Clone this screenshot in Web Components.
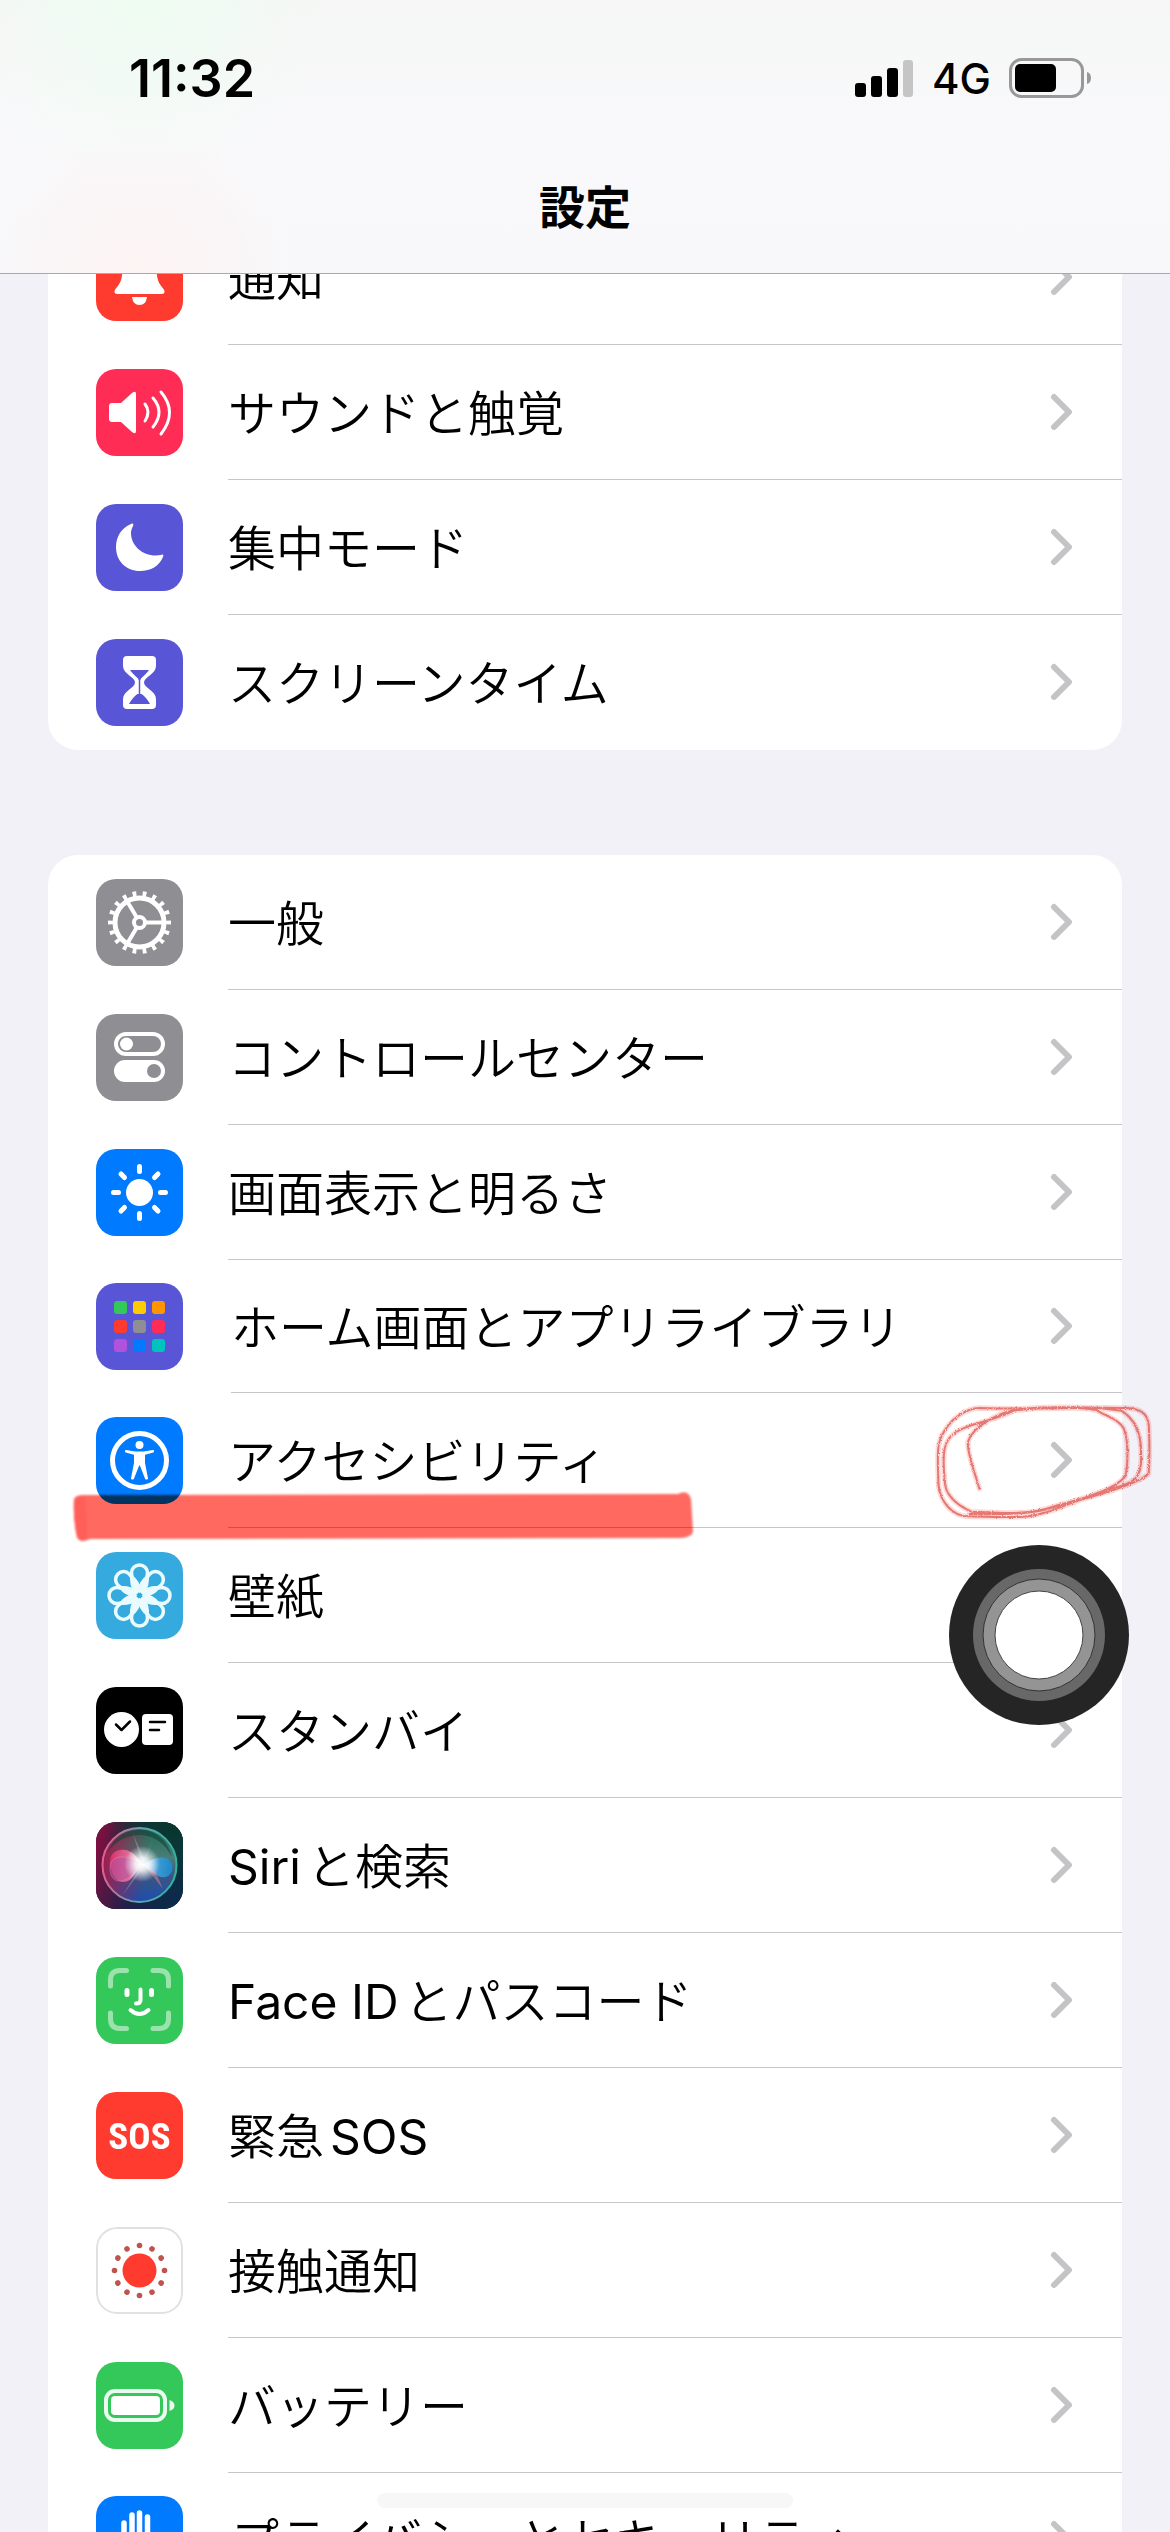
<!DOCTYPE html>
<html lang="ja">
<head>
<meta charset="utf-8">
<meta name="viewport" content="width=device-width, initial-scale=1">
<title>設定</title>
<style>
    html, body {
        margin: 0;
        height: 100%;
    }
    body {
        overflow: hidden;
        background: #f2f1f8;
        color: #000;
        font-family: Inter, "Noto Sans CJK JP", sans-serif;
        font-size: 48px;
    }
</style>
</head>
<body>
<settings-app>
    <status-bar slot="top" time="11:32" network="4G"></status-bar>
    <nav-bar slot="top">設定</nav-bar>

    <settings-group>
        <settings-row icon="bell" color="#ff3b30">通知</settings-row>
        <settings-row icon="sound" color="#ff2d55">サウンドと触覚</settings-row>
        <settings-row icon="moon" color="#5856d6">集中モード</settings-row>
        <settings-row icon="hourglass" color="#5856d6">スクリーンタイム</settings-row>
    </settings-group>

    <settings-group>
        <settings-row icon="gear" color="#8e8e93">一般</settings-row>
        <settings-row icon="toggles" color="#8e8e93">コントロールセンター</settings-row>
        <settings-row icon="sun" color="#007aff">画面表示と明るさ</settings-row>
        <settings-row icon="grid" color="#5856d6" compact>ホーム画面とアプリライブラリ</settings-row>
        <settings-row icon="person" color="#007aff">アクセシビリティ<marker-line slot="mark"></marker-line><pencil-ring slot="mark"></pencil-ring></settings-row>
        <settings-row icon="flower" color="#34aadf">壁紙</settings-row>
        <settings-row icon="standby" color="#000">スタンバイ</settings-row>
        <settings-row icon="siri" color="#123"><span class="lead">Siri</span>と検索</settings-row>
        <settings-row icon="face" color="#34c759"><span class="lead">Face ID</span>とパスコード</settings-row>
        <settings-row icon="sos" color="#ff3b30">緊急<span class="tail">SOS</span></settings-row>
        <settings-row icon="exposure" color="#fff">接触通知</settings-row>
        <settings-row icon="battery" color="#34c759">バッテリー</settings-row>
        <settings-row icon="hand" color="#007aff" compact>プライバシーとセキュリティ</settings-row>
    </settings-group>

    <assistive-touch slot="overlay"></assistive-touch>
    <home-indicator slot="overlay"></home-indicator>
</settings-app>

<script>
// All glyphs are drawn on the same 87 x 87 tile
const icons = {
    bell: `<path fill="#fff" d="M43.500 14c-11 0-17 8-17 18 0 14-2 17-7 23-2 3-1 5 2 5h44c3 0 4-2 2-5-5-6-7-9-7-23 0-10-6-18-17-18zM36 63h15q-1 8-7.500 8T36 63z"/>`,
    sound: `<path fill="#fff" d="M16 34h9l11-10q4-3 4 1v37q0 4-4 1L25 53h-9q-3 0-3-3V37q0-3 3-3z"/>
        <g fill="none" stroke="#fff" stroke-width="3" stroke-linecap="round"><path d="M49 35q6 8 0 17M57 29q12 14 0 29M65 23q17 20 0 42"/></g>`,
    moon: `<path fill="#fff" d="M35 20C25 24 20 33 20 43c0 14 10 24 24 24 11 0 19-5 23-14 1-2 0-3-2-2C49 54 35 43 35 29c0-3 1-5 2-7 1-2 0-3-2-2z"/>`,
    hourglass: `<path fill="#fff" d="M31 17h25q4 0 4 4v6c0 8-12 11-12 16.500s12 8.500 12 16.500v6q0 4-4 4H31q-4 0-4-4v-6c0-8 12-11 12-16.500S27 35 27 27v-6q0-4 4-4z"/>
        <path fill="#5856d6" d="M34 31h19q-2 3-8.500 9v14Q51 59 54 65H33q3-6 9.500-11V40Q36 34 34 31z"/><path stroke="#fff" stroke-width="5" d="M43.500 41v14"/><path stroke="#5856d6" stroke-width="1.500" d="M43.500 38v18"/>`,
    gear: `<g fill="none" stroke="#fff">
        <circle cx="43.500" cy="43.500" r="29" stroke-width="5" pathLength="36" stroke-dasharray=".75 1.250" stroke-dashoffset=".375"/>
        <circle cx="43.500" cy="43.500" r="24.500" stroke-width="5"/>
        <circle cx="43.500" cy="43.500" r="5.500" stroke-width="4"/>
        <path stroke-width="4" d="M50 43.500h18M40.500 38L31 22M40.500 49L31 65"/></g>`,
    toggles: `<rect x="20" y="20" width="47" height="20" rx="10" fill="none" stroke="#fff" stroke-width="4"/><circle cx="30.500" cy="30" r="6.500" fill="#fff"/>
        <rect x="18" y="46" width="51" height="22" rx="11" fill="#fff"/><circle cx="58" cy="57" r="7" fill="#8e8e93"/>`,
    sun: `<circle cx="43.500" cy="43.500" r="13.500" fill="#fff"/>
        <path stroke="#fff" stroke-width="5" stroke-linecap="round" d="M43.500 17.500v5M43.500 64.500v5M17.500 43.500h5M64.500 43.500h5M25 25l3.500 3.500M58.500 58.500L62 62M25 62l3.500-3.500M58.500 28.500L62 25"/>`,
    grid: ["#34c759", "#ffcc00", "#ff9500", "#ff3b30", "#8e8e93", "#ff2d55", "#af52de", "#007aff", "#00c3be"]
        .map((c, i) => `<rect x="${18 + (i % 3) * 19}" y="${18 + Math.floor(i / 3) * 19}" width="13" height="13" rx="3" fill="${c}"/>`).join(""),
    person: `<circle cx="43.500" cy="43.500" r="27" fill="none" stroke="#fff" stroke-width="5"/><circle cx="43.500" cy="28" r="4" fill="#fff"/>
        <path fill="#fff" stroke="#fff" stroke-width="2" stroke-linejoin="round" d="M30 34l9 1.500h9l9-1.500v.5l-9 2.500v9l3 15.500h-1l-5.500-14h-2l-5.500 14h-1l3-15.500v-9l-9-2.500z"/>`,
    flower: `<g fill="none" stroke="#e9fbff" stroke-width="3.500">` +
        [0, 45, 90, 135, 180, 225, 270, 315].map(a => `<path transform="rotate(${a} 43.5 43.5)" d="M43.500 39C40 37 35.500 28 35.500 21a8 8 0 0 1 16 0C51.500 28 47 37 43.500 39zM36 24C35 31 37 36 40 40M51 24C52 31 50 36 47 40"/>`).join("") +
        `<circle cx="43.500" cy="43.500" r="5"/></g>`,
    standby: `<circle cx="25.500" cy="42.500" r="17.500" fill="#fff"/><rect x="46" y="27" width="31" height="31" rx="4" fill="#fff"/>
        <path fill="none" stroke="#000" stroke-width="2.500" stroke-linecap="round" stroke-linejoin="round" d="M20 37.500l5.500 5.500 8.500-8.500M54 35h15M54 43h9"/>`,
    siri: `<defs>
        <linearGradient id="base" x1="0" y1=".3" x2="1" y2=".6"><stop stop-color="#7d1040"/><stop offset=".5" stop-color="#1f2048"/><stop offset="1" stop-color="#0a2c48"/></linearGradient>
        <radialGradient id="corner" cx=".9" cy="0" r=".8"><stop stop-color="#06372b"/><stop offset=".5" stop-color="#0a3a35" stop-opacity=".8"/><stop offset="1" stop-color="#06372b" stop-opacity="0"/></radialGradient>
        <linearGradient id="orb" x1=".5" y1="0" x2=".5" y2="1"><stop stop-color="#1f6b52"/><stop offset=".4" stop-color="#4a7d78"/><stop offset=".65" stop-color="#3a5580"/><stop offset="1" stop-color="#1c4db0"/></linearGradient>
        <linearGradient id="side" x1="0" y1=".4" x2=".6" y2=".5"><stop stop-color="#a01a50"/><stop offset="1" stop-color="#a01a50" stop-opacity="0"/></linearGradient>
        <linearGradient id="rim" x1="0" y1=".4" x2="1" y2=".5"><stop stop-color="#e0608c"/><stop offset=".5" stop-color="#62a6b0"/><stop offset="1" stop-color="#2fb3a0"/></linearGradient>
        <linearGradient id="pink"><stop stop-color="#e0306c"/><stop offset=".6" stop-color="#e8709c"/><stop offset="1" stop-color="#fff"/></linearGradient>
        <linearGradient id="blue"><stop stop-color="#e4f6ff"/><stop offset=".5" stop-color="#3fa0dc"/><stop offset="1" stop-color="#1a8ad0"/></linearGradient>
        <radialGradient id="flare"><stop stop-color="#fff"/><stop offset=".35" stop-color="#fff" stop-opacity=".85"/><stop offset="1" stop-color="#fff" stop-opacity="0"/></radialGradient></defs>
        <rect width="87" height="87" fill="url(#base)"/><rect width="87" height="87" fill="url(#corner)"/>
        <circle cx="43.500" cy="43" r="37" fill="url(#orb)"/><circle cx="43.500" cy="43" r="37" fill="url(#side)" stroke="url(#rim)" stroke-width="2"/>
        <path fill="#0f4238" opacity=".6" d="M12 30C18 14 31 8 44 8s27 8 32 27C68 19 55 13 44 13S20 18 12 30z"/>
        <path fill="url(#pink)" opacity=".9" d="M46 42C37 28 30 27 24 28c-9 1-12 10-9 19 3 13 13 16 20 10z"/>
        <path fill="#b05aa8" opacity=".5" stroke="#f0a0c8" stroke-width=".7" d="M46 42C30 31 14 33 14 46c0 18 17 18 32-4z"/>
        <path fill="url(#blue)" opacity=".9" d="M46 43c10-6 17-9 23-7 10 2 10 16 1 19-8 2-14-6-24-12z"/>
        <path fill="#9ec7e7" opacity=".35" d="M46 42L26 74l22-29 6 1zM46 42L37 12l12 26 8-20z"/>
        <path fill="#f08098" opacity=".5" d="M47 43l10 11 10 13-7-16z"/>
        <circle cx="46" cy="42" r="18" fill="url(#flare)"/>`,
    face: `<g fill="none" stroke="#fff" stroke-width="5" stroke-linecap="round">
        <path opacity=".5" d="M14.500 29V23q0-9.500 9.500-9.500h6.500M57 13.500h6q9.500 0 9.500 9.500v6M72.500 56v6q0 9.500-9.500 9.500h-6M30.500 71.500H24q-9.500 0-9.500-9.500v-6"/>
        <path d="M31 33.500v4M55.500 33.500v4"/><path stroke-width="4" d="M44.500 32.500V43q0 3.500-4.500 3.500M34.500 53q9 8 18 0"/></g>`,
    sos: `<text x="43.500" y="57" text-anchor="middle" fill="#fff" font-family="'Roboto Condensed', 'Open Sans Condensed', 'Liberation Sans Narrow', Roboto, sans-serif" font-weight="700" font-size="37">SOS</text>`,
    exposure: `<rect x="1" y="1" width="85" height="85" rx="20" fill="#fff" stroke="#e1e1e3" stroke-width="2"/><circle cx="43.500" cy="43.500" r="17" fill="#ff3b30"/>
        <g fill="#c0544c">` + [...Array(12).keys()].map(i => `<circle cx="43.500" cy="18.500" r="2.800" transform="rotate(${i * 30} 43.5 43.5)"/>`).join("") + `</g>`,
    battery: `<rect x="10" y="29" width="59" height="29" rx="9" fill="none" stroke="#fff" stroke-opacity=".9" stroke-width="4"/><rect x="15" y="34" width="49" height="19" rx="4" fill="#fff"/><path fill="#fff" fill-opacity=".9" d="M73.500 38q5 1.500 5 5.500t-5 5.500z"/>`,
    hand: `<path fill="none" stroke="#fff" stroke-width="5.500" stroke-linecap="round" d="M28 27v26M36 19v28M43.500 17v28M51.500 21v30M67 45L56 60"/><path fill="#fff" d="M25 42h30v12l6 3q-5 16-18 16-18 0-18-18z"/>`
};

function stamp(host, html) {
    const template = document.createElement("template");
    template.innerHTML = html;
    host.attachShadow({ mode: "open" }).appendChild(template.content.cloneNode(true));
}

class SettingsApp extends HTMLElement {
    constructor() {
        super();
        stamp(this, `
            <style>
                :host { display: flex; flex-direction: column; height: 100vh; overflow: hidden; position: relative; }
                header {
                    position: relative;
                    z-index: 2;
                    flex: none;
                    border-bottom: 1px solid #a9a9ad;
                    background:
                        radial-gradient(circle at 12% 0, #eefcf1 0, transparent 180px),
                        radial-gradient(circle at 12% 100%, #fdf3f3 0, transparent 160px),
                        linear-gradient(#f5f6f5, #f9f9fb 45%, #f8f8fa);
                }
                /* the list is scrolled a little way under the bar */
                main { display: flex; flex-direction: column; gap: 105px; margin-top: -64px; padding: 0 48px; }
            </style>
            <header><slot name="top"></slot></header>
            <main><slot></slot></main>
            <slot name="overlay"></slot>
        `);
    }
}

class StatusBar extends HTMLElement {
    constructor() {
        super();
        stamp(this, `
            <style>
                :host { display: flex; align-items: center; justify-content: space-between; height: 156px; padding: 0 78px 0 129px; }
                #time { font-size: 52px; font-weight: 600; }
                .right { display: flex; align-items: center; gap: 18px; }
                #network { font-size: 42px; font-weight: 450; }
                svg { display: block; }
            </style>
            <time id="time"></time>
            <div class="right">
                <svg width="59" height="38" viewBox="0 0 59 38" aria-label="電波"><rect y="24" width="11" height="14" rx="3"/><rect x="16" y="17" width="11" height="21" rx="3"/><rect x="32" y="9" width="11" height="29" rx="3"/><rect x="48" y="1" width="10" height="37" rx="3" fill="#c5c5c6"/></svg>
                <span id="network"></span>
                <svg width="83" height="40" viewBox="0 0 83 40" aria-label="バッテリー残量"><rect x="1.500" y="1.500" width="72" height="37" rx="11" fill="none" stroke="#98989b" stroke-width="3"/><rect x="6" y="6" width="41" height="28" rx="5"/><path fill="#98989b" d="M78 14q4 1 4 6t-4 6z"/></svg>
            </div>
        `);
    }
    connectedCallback() {
        this.shadowRoot.getElementById("time").textContent = this.getAttribute("time");
        this.shadowRoot.getElementById("network").textContent = this.getAttribute("network");
    }
}

class NavBar extends HTMLElement {
    constructor() {
        super();
        stamp(this, `
            <style>
                :host { display: flex; align-items: center; justify-content: center; height: 117px; }
                h1 { margin: 0 0 16px; font-size: 46px; line-height: 64px; font-weight: 700; }
            </style>
            <h1><slot></slot></h1>
        `);
    }
}

class SettingsGroup extends HTMLElement {
    constructor() {
        super();
        stamp(this, `
            <style>
                :host { display: block; border-radius: 30px; background: #fff; }
                ::slotted(:last-child) { --line: transparent; }
            </style>
            <slot></slot>
        `);
    }
}

class SettingsRow extends HTMLElement {
    constructor() {
        super();
        stamp(this, `
            <style>
                :host { display: block; position: relative; --height: 135px; --inset: 0px; }
                :host([compact]) { --height: 133px; --inset: 3px; }
                a { display: flex; align-items: center; gap: 45px; height: var(--height); padding-left: 48px; color: inherit; text-decoration: none; }
                .icon { flex: none; width: 87px; height: 87px; border-radius: 20px; overflow: hidden; }
                .icon svg, .chevron { display: block; }
                .body {
                    box-sizing: border-box;
                    display: flex; flex: 1; align-items: center; justify-content: space-between;
                    height: 100%;
                    margin-left: var(--inset);
                    padding-right: 49px;
                    border-bottom: 1px solid var(--line, #c6c6c8);
                }
                .label { line-height: 64px; padding-top: 4px; font-weight: 350; white-space: nowrap; }
                ::slotted(span) { font-weight: 400; }
                ::slotted(.lead) { margin-right: 6px; }
                ::slotted(.tail) { margin-left: 6px; }
            </style>
            <a href="#">
                <span class="icon"></span>
                <span class="body">
                    <span class="label"><slot></slot></span>
                    <svg class="chevron" width="23" height="38" viewBox="0 0 23 38" fill="none" stroke="#c4c4c6" stroke-width="6" stroke-linecap="round" stroke-linejoin="round"><path d="M4 4l15 15L4 34"/></svg>
                </span>
            </a>
            <slot name="mark"></slot>
        `);
    }
    connectedCallback() {
        const icon = this.shadowRoot.querySelector(".icon");
        icon.style.background = this.getAttribute("color");
        icon.innerHTML = `<svg width="87" height="87" viewBox="0 0 87 87">${icons[this.getAttribute("icon")]}</svg>`;
    }
}

// Highlighter stroke under a row
class MarkerLine extends HTMLElement {
    constructor() {
        super();
        stamp(this, `
            <style>
                :host { position: absolute; left: 24px; top: 98px; z-index: 1; mix-blend-mode: multiply; pointer-events: none; }
                svg { display: block; }
            </style>
            <svg width="624" height="52" viewBox="0 0 624 52">
                <filter id="soft"><feGaussianBlur stdDeviation="1"/></filter>
                <g filter="url(#soft)">
                    <path fill="#ff6961" d="M2 9q1-5 10-5l594-1q10-5 13 5l2 33q-2 6-15 6L18 48q-10 5-13-2Q1 28 2 9z"/>
                    <path fill="#ff5e58" d="M2 9q1-5 10-4 4 20 3 42-7 5-10-1Q1 28 2 9z"/>
                </g>
            </svg>
        `);
    }
}

// Loose pencil loop round a row's chevron
class PencilRing extends HTMLElement {
    constructor() {
        super();
        const loop = "M239 746C228 705 200 635 205 605C218 560 300 512 370 506C450 500 530 500 590 510C615 528 655 535 672 565C688 600 685 680 676 710C640 755 530 780 460 800C380 830 270 815 215 815C160 790 135 760 135 720C130 670 130 620 145 600C175 550 290 545 340 512C450 500 570 498 665 512C710 540 725 590 724 640C730 730 690 730 620 750C540 775 450 825 370 830C310 832 240 830 190 828C140 815 115 765 116 720C115 670 110 620 125 590C150 535 200 505 240 504C400 510 560 500 680 504C735 506 748 530 748 570C750 620 750 660 747 700C715 735 560 775 460 802C400 825 290 823 210 822";
        stamp(this, `
            <style>
                :host { position: absolute; right: -35px; top: 7px; z-index: 1; pointer-events: none; }
                svg { display: block; }
            </style>
            <svg width="224" height="123" viewBox="100 480 672 369" fill="none" stroke-linecap="round">
                <filter id="grain" x="-5%" y="-5%" width="110%" height="110%"><feTurbulence type="fractalNoise" baseFrequency=".4" numOctaves="2"/><feDisplacementMap in="SourceGraphic" scale="9"/></filter>
                <path stroke="#ff6a64" stroke-opacity=".25" stroke-width="16" d="${loop}"/>
                <path stroke="#dc5650" stroke-opacity=".75" stroke-width="6" filter="url(#grain)" d="${loop}"/>
            </svg>
        `);
    }
}

class AssistiveTouch extends HTMLElement {
    constructor() {
        super();
        stamp(this, `
            <style>
                :host { position: absolute; right: 41px; top: 1545px; z-index: 3; }
                button { display: block; padding: 0; border: 0; border-radius: 50%; background: none; }
                svg { display: block; }
            </style>
            <button type="button" aria-label="AssistiveTouch">
                <svg width="180" height="180" viewBox="0 0 180 180"><circle cx="90" cy="90" r="90" fill="#252525"/><circle cx="90" cy="90" r="66" fill="#686868"/><circle cx="90" cy="90" r="56" fill="#949494" stroke="#333" stroke-width="1"/><circle cx="90" cy="90" r="44" fill="#fff" stroke="#444" stroke-width="1"/></svg>
            </button>
        `);
    }
}

class HomeIndicator extends HTMLElement {
    constructor() {
        super();
        stamp(this, `
            <style>
                :host { position: absolute; left: 0; right: 0; bottom: 24px; z-index: 3; display: flex; justify-content: center; pointer-events: none; }
                i { width: 416px; height: 15px; border-radius: 8px; background: #f7f7f7; }
            </style>
            <i></i>
        `);
    }
}

customElements.define("settings-app", SettingsApp);
customElements.define("status-bar", StatusBar);
customElements.define("nav-bar", NavBar);
customElements.define("settings-group", SettingsGroup);
customElements.define("settings-row", SettingsRow);
customElements.define("marker-line", MarkerLine);
customElements.define("pencil-ring", PencilRing);
customElements.define("assistive-touch", AssistiveTouch);
customElements.define("home-indicator", HomeIndicator);
</script>
</body>
</html>
